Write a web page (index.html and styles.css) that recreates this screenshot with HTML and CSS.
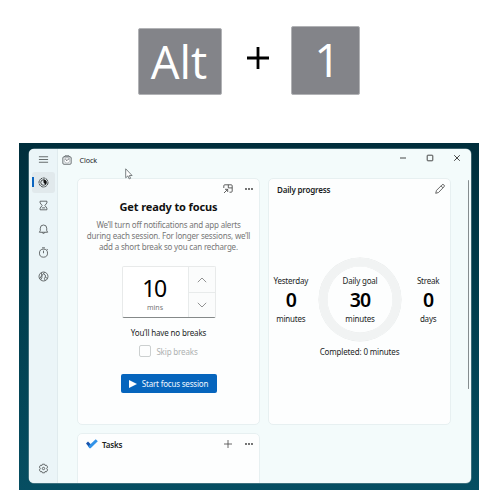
FILE: index.html
```
<!DOCTYPE html>
<html lang="en">
<head>
<meta charset="utf-8">
<title>Clock</title>
<link rel="stylesheet" href="styles.css">
</head>
<body>
<header class="keys">
  <kbd class="key key-alt">Alt</kbd>
  <svg class="plus" viewBox="0 0 22 22"><path d="M11 0v22M0 11h22"/></svg>
  <kbd class="key key-one">1</kbd>
</header>
<main class="desktop">
  <div class="window">
    <nav class="sidebar">
      <span class="nav menu"><svg class="icon" viewBox="0 0 12 12"><path d="M1 3h10M1 6h10M1 9h10"/></svg></span>
      <span class="nav active"><svg class="icon" viewBox="0 0 12 12"><circle cx="6" cy="6" r="4.9" stroke-dasharray="3 .6"/><circle cx="6" cy="6" r="3"/><path class="solid" d="M6 2.6a3.4 3.4 0 0 1 2.3 5.8L6 6z"/></svg></span>
      <span class="nav"><svg class="icon" viewBox="0 0 12 12"><path d="M2.3 1.3h7.4v1.9L7.5 6l2.2 2.8v1.9H2.3V8.8L4.5 6 2.3 3.2zM4.2 8.6h3.6"/></svg></span>
      <span class="nav"><svg class="icon" viewBox="0 0 12 12"><path d="M1.5 9h9L9.5 7.2V4.6a3.5 3.5 0 0 0-7 0v2.6zM4.6 9.2a1.45 1.45 0 0 0 2.8 0"/></svg></span>
      <span class="nav"><svg class="icon" viewBox="0 0 12 12"><circle cx="6" cy="6.7" r="4.4"/><path d="M6 4v2.8M4.4 .9h3.2M9.5 2.1l1.1 1.1"/></svg></span>
      <span class="nav"><svg class="icon" viewBox="0 0 12 12"><circle cx="6" cy="6" r="4.9"/><path d="M1.8 8.4l2.4-3.6L3.6 2M4.2 4.8L6 3.2l2 1.2v2.2l2.4 1.8M6 3.2L7 1.4M4.2 4.8v2.4L3 9.6M8 6.6L7 8l.8 2.3"/></svg></span>
      <span class="nav settings"><svg class="icon" viewBox="0 0 12 12"><path d="M4.8 1.3h2.4l.5 1.4 1.5-.3 1.3 2-1 1.6 1 1.6-1.3 2-1.5-.3-.5 1.4H4.8l-.5-1.4-1.5.3-1.3-2 1-1.6-1-1.6 1.3-2 1.5.3z"/><circle cx="6" cy="6" r="1.3"/></svg></span>
    </nav>
    <section class="content">
      <div class="titlebar">
        <svg class="app-icon" viewBox="0 0 10 10"><path class="case" d="M1.3 3.2L3 .8h4l1.8 2.4"/><rect class="case" x=".8" y="1.8" width="8.4" height="7.5" rx="1.2"/><circle class="face" cx="5" cy="5.4" r="2.7"/><path class="hands" d="M3.4 4.3L5 5.6l2-2"/></svg>
        <span class="app-name">Clock</span>
        <svg class="window-buttons" viewBox="0 0 60 8"><path d="M0 4h6M54.2 1.2l5.6 5.6M59.8 1.2l-5.6 5.6"/><rect x="27.2" y="1.2" width="5.6" height="5.6" rx=".6"/></svg>
      </div>
      <div class="cards">
        <article class="card focus">
          <div class="tools">
            <svg class="expand" viewBox="0 0 10 10"><path d="M.8 4V1.8a1 1 0 0 1 1-1h6.4a1 1 0 0 1 1 1v5.4a1 1 0 0 1-1 1H6.5M5.3.8v3.1h3.9M1 9l3.5-3.5M2 5.3h2.7V8"/></svg>
            <svg class="dots" viewBox="0 0 8 2"><circle cx="1" cy="1" r=".9"/><circle cx="4" cy="1" r=".9"/><circle cx="7" cy="1" r=".9"/></svg>
          </div>
          <h1>Get ready to focus</h1>
          <p class="intro"><span>We’ll turn off notifications and app alerts</span><br><span>during each session. For longer sessions, we’ll</span><br><span>add a short break so you can recharge.</span></p>
          <div class="stepper">
            <div class="amount"><b>10</b><small>mins</small></div>
            <div class="arrows"><span><svg viewBox="0 0 10 6"><path d="M.8 5.2L5 1l4.2 4.2"/></svg></span><span><svg viewBox="0 0 10 6"><path d="M.8.8L5 5 9.2.8"/></svg></span></div>
          </div>
          <p class="breaks">You’ll have no breaks</p>
          <label class="skip"><i class="box"></i><span>Skip breaks</span></label>
          <button class="start"><svg viewBox="0 0 8 8"><path d="M0 0v8L8 4z"/></svg><span>Start focus session</span></button>
        </article>
        <article class="card progress">
          <div class="card-head"><h2>Daily progress</h2><svg class="pencil" viewBox="0 0 10 10"><path d="M.7 9.3l.8-2.9L7 .9a1.25 1.25 0 0 1 1.9 0 1.3 1.3 0 0 1 0 2L3.5 8.5zM6 1.9l2 2"/></svg></div>
          <div class="stats">
            <div class="stat side"><span class="yesterday">Yesterday</span><b>0</b><span class="unit">minutes</span></div>
            <div class="stat ring"><span class="goal">Daily goal</span><b>30</b><span class="unit">minutes</span></div>
            <div class="stat side"><span class="streak">Streak</span><b>0</b><span class="unit">days</span></div>
          </div>
          <p class="completed">Completed: 0 minutes</p>
        </article>
        <article class="card tasks">
          <svg class="check" viewBox="0 0 12 10"><path class="check-dark" d="M0 4.4l2-2 4 4-2.1 2.9z"/><path class="check-light" d="M3.7 9.2L2 7.4 9.7.2l2.1 2L4.6 9.2z"/></svg>
          <h2>Tasks</h2>
          <svg class="add" viewBox="0 0 8 8"><path d="M4 0v8M0 4h8"/></svg>
          <svg class="dots" viewBox="0 0 8 2"><circle cx="1" cy="1" r=".9"/><circle cx="4" cy="1" r=".9"/><circle cx="7" cy="1" r=".9"/></svg>
        </article>
      </div>
      <i class="scrollbar"></i>
    </section>
  </div>
</main>
<svg class="cursor" viewBox="0 0 8 12"><path d="M.7.8v9l2.2-1.9 1.3 3 1.4-.6-1.3-2.8h2.8z"/></svg>
</body>
</html>
```
FILE: styles.css
```
* { box-sizing: border-box; }
body {
  margin: 0; width: 500px; height: 500px; overflow: hidden; background: #fff; color: #1c1e1f;
  font: 8px/11px "Noto Sans", "Open Sans", sans-serif;
}
h1, h2, p { margin: 0; }
svg { display: block; fill: none; flex: none; overflow: visible; }
.keys { height: 143px; padding: 26px 140px 0 138px; display: flex; align-items: flex-start; }
.key {
  display: flex; justify-content: center; align-items: center; color: #fff; background: #838489;
  border: 1px solid #b1b2b5; border-radius: 2px; font-family: "Open Sans", sans-serif; white-space: nowrap;
}
.key-alt { width: 84px; height: 67px; margin-top: 2px; padding: 0 2px 1px 0; font-size: 45.5px; }
.key-one { width: 69px; height: 69px; margin-left: auto; padding: 0 0 2px 4px; font-size: 46px; }
.plus { width: 22px; height: 22px; margin: 21px 0 0 25px; stroke: #000; stroke-width: 2.8; }
.desktop {
  width: 460px; height: 347px; margin-left: 19px; padding: 6px 8px 7px 10px;
  background: linear-gradient(180deg, #002e3c, #003c4b 40%, #064e62);
}
.window {
  width: 442px; height: 334px; display: flex; overflow: hidden; border-radius: 5px;
  background: #f3fbfb; box-shadow: 0 0 0 .5px #75949c;
}
.sidebar {
  width: 29px; flex: none; display: flex; flex-direction: column; align-items: center;
  background: #ebf5f8; border-right: 1px solid #e0ebee;
}
.nav { width: 23px; height: 21px; margin-bottom: 2.5px; display: grid; place-items: center; border-radius: 3px; }
.menu { margin-bottom: 1.5px; }
.active {
  background: linear-gradient(#0b65c0, #0b65c0) 0 50% / 2px 10px no-repeat #e1e9ec;
}
.active .icon { stroke: #25292a; }
.settings { margin-top: auto; margin-bottom: 4px; }
.icon { width: 11px; height: 11px; stroke: #4b5051; stroke-width: .9; }
.icon .solid { fill: #111; stroke: none; }
.content { flex: 1; display: flex; flex-direction: column; position: relative; }
.titlebar { height: 29px; flex: none; padding: 0 11px 7px 4px; display: flex; align-items: center; }
.app-icon { width: 10px; height: 10px; }
.case { fill: #e9eeee; stroke: #555c60; stroke-width: .8; }
.face { fill: #fff; stroke: #899198; stroke-width: .5; }
.hands { stroke: #40484c; stroke-width: .8; }
.app-name { margin-left: 7.5px; font-size: 7.2px; letter-spacing: -.1px; }
.window-buttons { width: 60px; height: 8px; margin: -4px 0 0 auto; stroke: #333; stroke-width: .9; }
.cards { padding-left: 19px; display: grid; grid-template-columns: 183px 183px; grid-template-rows: 247px 80px; gap: 8px; }
.card { background: #fdfefe; border: 1px solid #e7f0f1; border-radius: 5px; }
.focus { display: flex; flex-direction: column; align-items: center; }
.tools { align-self: stretch; height: 20px; padding: 5px 6px 0 0; display: flex; justify-content: flex-end; gap: 12px; }
.expand { width: 10px; height: 10px; stroke: #444; stroke-width: .85; }
.dots { width: 8px; height: 2px; fill: #333; margin-top: 4px; }
h1 { font-size: 11px; line-height: 16px; font-weight: 700; color: #111; white-space: nowrap; letter-spacing: -.12px; }
.intro { margin-top: 4px; color: #777; text-align: center; line-height: 11px; white-space: nowrap; letter-spacing: -.19px; }
.stepper {
  width: 94px; height: 52px; margin-top: 14px; display: flex; border: 1px solid #e8eaea;
  border-bottom-color: #858989; border-radius: 2px; background: #fff;
}
.amount { width: 65px; display: flex; flex-direction: column; align-items: center; }
.amount b { font-size: 23px; line-height: 28px; font-weight: 400; color: #000; margin-top: 7px; padding-right: 2px; letter-spacing: -1.3px; }
.amount small { font-size: 7px; line-height: 9px; color: #777; }
.amount small { margin-top: 1px; }
.arrows { flex: 1; display: grid; grid-template-rows: 25px 1fr; border-left: 1px solid #e8ebeb; background: #fbfcfc; }
.arrows span { display: grid; place-items: center; }
.arrows span + span { border-top: 1px solid #e8ebeb; }
.arrows svg { width: 10px; height: 6px; stroke: #777; stroke-width: .8; }
.breaks { margin-top: 9px; white-space: nowrap; letter-spacing: -.15px; }
.skip { margin-top: 7px; display: flex; align-items: center; gap: 5px; color: #aeb1b1; letter-spacing: -.15px; }
.box { width: 12px; height: 12px; border: 1px solid #ccd0d0; border-radius: 2px; }
.start {
  width: 96px; height: 19px; margin-top: 17px; padding: 0; border: 0; border-radius: 2px; display: flex;
  align-items: center; justify-content: center; gap: 5px; font: inherit; letter-spacing: -.2px;
  color: #eff7ff; background: #0665bd; white-space: nowrap;
}
.start svg { width: 8px; height: 8px; fill: #fff; }
.card-head { display: flex; justify-content: space-between; padding: 5px 5px 0 8px; }
h2 { font-size: 8px; line-height: 11px; font-weight: 600; white-space: nowrap; letter-spacing: -.17px; }
.pencil { width: 10px; height: 10px; stroke: #444; stroke-width: .8; }
.stats { display: flex; align-items: center; margin-top: 63px; }
.stat { display: flex; flex-direction: column; align-items: center; justify-content: center; white-space: nowrap; letter-spacing: -.2px; }
.stat b { font-size: 19.5px; line-height: 27px; font-weight: 600; color: #000; letter-spacing: -.8px; }
.side { width: 44px; margin-right: 6px; }
.side:last-child { margin: 0 0 0 5px; }
.ring { width: 83px; height: 83px; border-radius: 50%; border: 8px solid #f1f3f3; box-shadow: 0 0 0 .5px #e5e8e8, inset 0 0 0 .5px #e9ebeb; }
.completed { margin-top: 5px; text-align: center; letter-spacing: -.15px; }
.tasks { display: flex; align-items: flex-start; padding: 5px 6px 0 8px; }
.check { width: 12px; height: 10px; }
.check-dark { fill: #1855ad; }
.check-light { fill: #3293e8; }
.tasks h2 { margin-left: 4px; }
.add { width: 8px; height: 8px; margin: 1px 0 0 auto; stroke: #444; stroke-width: .8; }
.tasks .dots { margin: 4px 0 0 13px; }
.scrollbar { position: absolute; right: 2px; top: 31px; width: 1.5px; height: 209px; border-radius: 1px; background: #858d8f; }
.cursor { position: absolute; left: 125px; top: 168px; width: 8px; height: 12px; fill: #fff; stroke: #5c6264; stroke-width: .8; }
```
